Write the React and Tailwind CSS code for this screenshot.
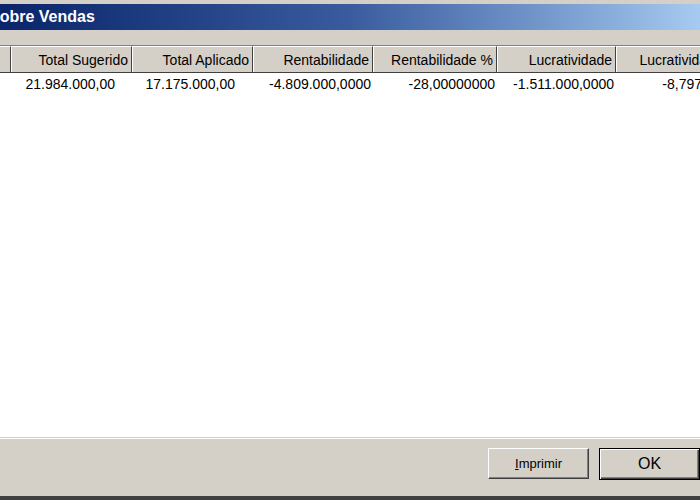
// Janela "Sobre Vendas" (recorte) — grid de totais com rodapé de botões

const columns = [
    { label: '', value: '', w: 'w-[11px]', pr: 'pr-[2px]' },
    { label: 'Total Sugerido', value: '21.984.000,00', w: 'w-[121px]', pr: 'pr-[17px]' },
    { label: 'Total Aplicado', value: '17.175.000,00', w: 'w-[121px]', pr: 'pr-[18px]' },
    { label: 'Rentabilidade', value: '-4.809.000,0000', w: 'w-[120px]', pr: 'pr-[2px]' },
    { label: 'Rentabilidade %', value: '-28,00000000', w: 'w-[124px]', pr: 'pr-[2px]' },
    { label: 'Lucratividade', value: '-1.511.000,0000', w: 'w-[119px]', pr: 'pr-[2px]' },
    { label: 'Lucratividade %', value: '-8,79720000', w: 'w-[127px]', pr: 'pr-[2px]' },
]

export default function App() {
    return (
        <div className="flex h-[500px] w-[700px] flex-col overflow-hidden bg-[#d4d0c8] font-['Liberation_Sans',Arial,sans-serif] text-black">
            <div className="h-[4px] shrink-0 bg-[#d4d0c8]" />

            <div className="flex h-[26px] shrink-0 items-center overflow-hidden bg-gradient-to-r from-[#0a246a] via-[#3a5c9e] to-[#a6caf0]">
                <span className="-ml-[11px] whitespace-nowrap text-[16px] font-bold text-white">Sobre Vendas</span>
            </div>

            <div className="h-[15px] shrink-0" />

            <div className="flex-1 overflow-hidden border-t border-[#808080] bg-white">
                <div className="flex h-[27px] border-b border-[#404040] bg-[#d4d0c8]">
                    {columns.map((col, i) => (
                        <div
                            key={i}
                            className={`${col.w} ${i === 0 ? 'pr-[2px]' : 'pr-[3px]'} flex shrink-0 items-center justify-end overflow-hidden whitespace-nowrap border-r border-t border-r-[#404040] border-t-white pt-[2px] text-[14px] ${i > 0 ? 'border-l border-l-white' : ''}`}
                        >
                            {col.label}
                        </div>
                    ))}
                </div>
                <div className="flex h-[22px]">
                    {columns.map((col, i) => (
                        <div
                            key={i}
                            className={`${col.w} ${col.pr} flex shrink-0 items-center justify-end overflow-hidden whitespace-nowrap text-[14px]`}
                        >
                            {col.value}
                        </div>
                    ))}
                </div>
            </div>

            <div className="flex h-[59px] shrink-0 items-start justify-end gap-[10px] border-t border-[#d4d0c8] pt-[10px] shadow-[inset_0_1px_0_#ffffff]">
                <button
                    type="button"
                    className="h-[31px] w-[101px] shrink-0 border border-t-white border-l-white border-r-[#404040] border-b-[#404040] bg-[#d4d0c8] text-[13px] shadow-[inset_-1px_-1px_0_#808080]"
                >
                    <span className="underline">I</span>mprimir
                </button>
                <button
                    type="button"
                    className="h-[32px] w-[101px] shrink-0 border border-black bg-[#d4d0c8] text-[16px] shadow-[inset_1px_1px_0_#ffffff,inset_-1px_-1px_0_#404040,inset_-2px_-2px_0_#808080]"
                >
                    OK
                </button>
            </div>

            <div className="h-[4px] shrink-0 bg-[#404040]" />
        </div>
    )
}
